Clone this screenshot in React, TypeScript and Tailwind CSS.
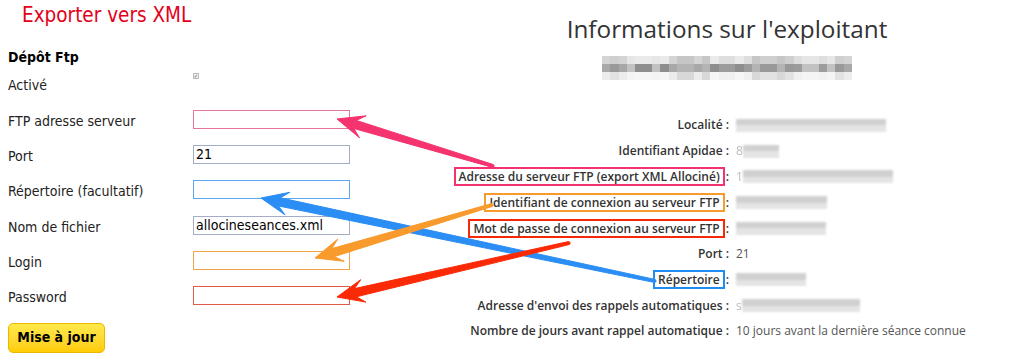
import React from "react";

type Pt = [number, number];

const arrows: { color: string; tail: Pt; tip: Pt }[] = [
  { color: "#2b8ef5", tail: [655, 281], tip: [261, 198] },
  { color: "#f5336f", tail: [493, 166], tip: [337, 119] },
  { color: "#f89a2c", tail: [492, 205], tip: [315, 258] },
  { color: "#fb2a06", tail: [569, 243], tip: [337, 297] },
];

function arrowPoints(tail: Pt, tip: Pt) {
  const dx = tip[0] - tail[0];
  const dy = tip[1] - tail[1];
  const len = Math.hypot(dx, dy);
  const ux = dx / len;
  const uy = dy / len;
  const nx = -uy;
  const ny = ux;
  const headLen = 27;
  const neck = [tip[0] - ux * headLen * 0.7, tip[1] - uy * headLen * 0.7];
  const base = [tip[0] - ux * headLen, tip[1] - uy * headLen];
  const st = 1.5;
  const sh = 4.2;
  const hw = 11.5;
  const pts = [
    [tail[0] + nx * st, tail[1] + ny * st],
    [neck[0] + nx * sh, neck[1] + ny * sh],
    [base[0] + nx * hw, base[1] + ny * hw],
    tip,
    [base[0] - nx * hw, base[1] - ny * hw],
    [neck[0] - nx * sh, neck[1] - ny * sh],
    [tail[0] - nx * st, tail[1] - ny * st],
  ];
  return pts.map((p) => `${p[0].toFixed(1)},${p[1].toFixed(1)}`).join(" ");
}

const fields = [
  { label: "FTP adresse serveur", value: "", border: "border-[#e4769a]" },
  { label: "Port", value: "21", border: "border-[#a4acc8]" },
  { label: "Répertoire (facultatif)", value: "", border: "border-[#5ba6f2]" },
  { label: "Nom de fichier", value: "allocineseances.xml", border: "border-[#a4acc8]" },
  { label: "Login", value: "", border: "border-[#f2a346]" },
  { label: "Password", value: "", border: "border-[#e25a48]" },
];

const mosaicTop = ["bg-[#d4d4d4]", "bg-[#e6e6e6]", "bg-[#cfcfcf]", "bg-[#dedede]", "bg-[#c6c6c6]", "bg-[#eaeaea]"];
const mosaicMid = ["bg-[#9c9c9c]", "bg-[#b4b4b4]", "bg-[#8e8e8e]", "bg-[#a8a8a8]", "bg-[#c2c2c2]", "bg-[#999999]"];
const mosaicBot = ["bg-[#ececec]", "bg-[#f4f4f4]", "bg-[#e2e2e2]", "bg-[#f0f0f0]", "bg-[#d8d8d8]", "bg-[#f6f6f6]"];

type Row = { label: string; box?: string; value?: string; prefix?: string; bar?: string };

const rows: Row[] = [
  { label: "Localité", bar: "w-[150px]" },
  { label: "Identifiant Apidae", prefix: "8", bar: "w-[36px]" },
  { label: "Adresse du serveur FTP (export XML Allociné)", box: "border-[#f3326f]", prefix: "1", bar: "w-[150px]" },
  { label: "Identifiant de connexion au serveur FTP", box: "border-[#f89b2e]", bar: "w-[91px]" },
  { label: "Mot de passe de connexion au serveur FTP", box: "border-[#f5280a]", bar: "w-[90px]" },
  { label: "Port", value: "21" },
  { label: "Répertoire", box: "border-[#1e8cf5]", bar: "w-[70px]" },
  { label: "Adresse d'envoi des rappels automatiques", prefix: "s", bar: "w-[118px]" },
  { label: "Nombre de jours avant rappel automatique", value: "10 jours avant la dernière séance connue" },
];

function Blur({ w }: { w: string }) {
  return (
    <div className={`${w} h-[13px] flex flex-col blur-[1.2px]`}>
      <div className="flex-1 bg-[#d0d0d0]" />
      <div className="flex-1 bg-[#e4e4e4]" />
    </div>
  );
}

export default function App() {
  return (
    <div className="relative w-[1024px] h-[362px] bg-white overflow-hidden flex">
      <div className="w-[430px] pl-2 font-['DejaVu_Sans_Condensed','DejaVu_Sans',sans-serif] text-[14px] text-[#222]">
        <div className="h-[30px] leading-[30px] pl-[14px] text-[20.5px] text-[#e3001b]">Exporter vers XML</div>
        <div className="mt-[18px] h-[18px] leading-[18px] font-bold text-black">Dépôt Ftp</div>
        <div className="mt-[2.3px] flex flex-col">
          <div className="h-[35.33px] flex items-center">
            <div className="w-[185px]">Activé</div>
            <div className="self-start mt-[5px] w-[6px] h-[6px] border border-[#bbb] bg-[#eee] text-[5px] leading-[4px] text-[#444] text-center">✓</div>
          </div>
          {fields.map((f) => (
            <div key={f.label} className="h-[35.33px] flex items-center">
              <div className="w-[185px]">{f.label}</div>
              <div className={`-mt-[4px] w-[157px] h-[19px] border ${f.border} px-[2px] text-[14px] leading-[17px] text-black`}>{f.value}</div>
            </div>
          ))}
        </div>
        <button className="mt-[7px] w-[97px] h-[30px] rounded-[5px] border border-[#ebb800] bg-gradient-to-b from-[#ffe94a] to-[#ffcc00] font-bold text-[14px] text-black">
          Mise à jour
        </button>
      </div>

      <div className="w-[594px] font-['Open_Sans',sans-serif] text-[#333]">
        <div className="mt-[13px] h-[32px] leading-[32px] text-center text-[24.3px] font-medium">Informations sur l'exploitant</div>
        <div className="mt-[10.5px] mx-auto w-[250px] h-[25px] flex flex-col">
          {[mosaicTop, mosaicMid, mosaicBot].map((set, r) => (
            <div key={r} className="flex-1 flex">
              {Array.from({ length: 30 }).map((_, i) => (
                <div key={i} className={`flex-1 ${set[(i * 7 + r * 3 + ((i * i) % 5)) % set.length]}`} />
              ))}
            </div>
          ))}
        </div>
        <div className="mt-[32px] flex flex-col text-[12px]">
          {rows.map((r) => (
            <div key={r.label} className="h-[25.75px] flex items-center">
              <div className="w-[299px] text-right font-semibold whitespace-nowrap">
                {r.box ? (
                  <>
                    <span className={`inline-block border-[2.5px] ${r.box} px-[3px] leading-[15px]`}>{r.label}</span>
                    <span className="ml-[1px]">:</span>
                  </>
                ) : (
                  <span>{r.label} :</span>
                )}
              </div>
              <div className="pl-[7px] flex items-center text-[#555]">
                {r.value}
                {r.prefix && <span className="text-[#bbb] blur-[0.6px]">{r.prefix}</span>}
                {r.bar && <Blur w={r.bar} />}
              </div>
            </div>
          ))}
        </div>
      </div>

      <svg className="absolute inset-0 pointer-events-none" width="1024" height="362">
        {arrows.map((a) => (
          <g key={a.color} fill={a.color}>
            <polygon points={arrowPoints(a.tail, a.tip)} strokeLinejoin="round" stroke={a.color} strokeWidth="1" />
            <circle cx={a.tail[0]} cy={a.tail[1]} r="1.6" />
          </g>
        ))}
      </svg>
    </div>
  );
}
